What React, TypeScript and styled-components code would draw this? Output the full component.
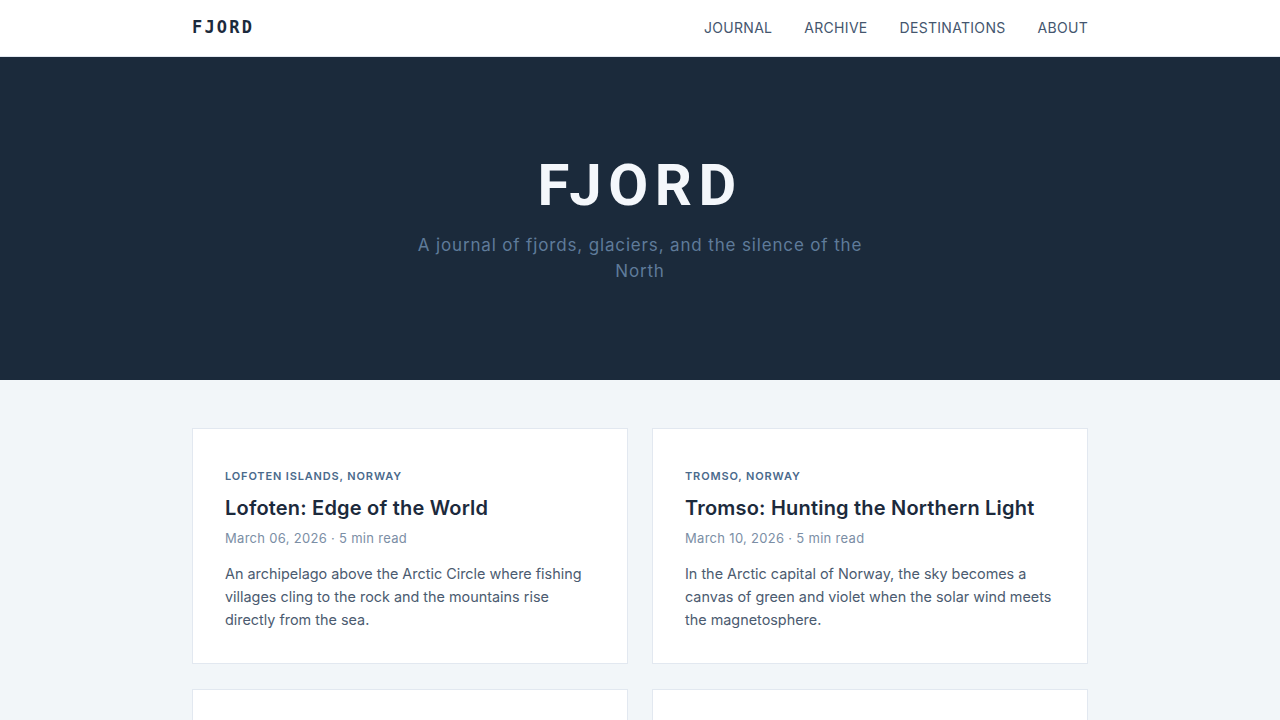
import React from "react";
import styled, { createGlobalStyle } from "styled-components";

const Global = createGlobalStyle`
  * { box-sizing: border-box; }
  body { margin: 0; background: #f2f6f9; font-family: Inter, "Noto Sans", sans-serif; -webkit-font-smoothing: antialiased; }
`;

const Header = styled.header`
  background: #ffffff;
  border-bottom: 1px solid #e2e8f0;
  height: 57px;
`;

const Container = styled.div`
  width: 896px;
  margin: 0 auto;
`;

const HeaderInner = styled(Container)`
  height: 54px;
  display: flex;
  align-items: center;
  justify-content: space-between;
`;

const Logo = styled.div`
  font-family: "DejaVu Sans Mono", monospace;
  font-weight: 700;
  font-size: 17px;
  letter-spacing: 2.2px;
  color: #1c2a3c;
`;

const Nav = styled.nav`
  display: flex;
  gap: 32px;
`;

const NavLink = styled.a`
  font-size: 14px;
  letter-spacing: 0.3px;
  color: #44566e;
  text-transform: uppercase;
  text-decoration: none;
`;

const Hero = styled.section`
  background: #1b2a3b;
  height: 323px;
  display: flex;
  flex-direction: column;
  align-items: center;
  padding-top: 94px;
`;

const HeroTitle = styled.h1`
  margin: 0;
  font-family: Roboto, Inter, sans-serif;
  font-weight: 700;
  font-size: 58px;
  line-height: 68px;
  letter-spacing: 6.5px;
  color: #f4f7fb;
`;

const HeroSub = styled.p`
  margin: 13px 0 0;
  max-width: 470px;
  text-align: center;
  font-size: 17px;
  line-height: 26px;
  letter-spacing: 0.85px;
  color: #5f7b9a;
`;

const Grid = styled(Container)`
  display: grid;
  grid-template-columns: 1fr 1fr;
  gap: 25px 24px;
  padding: 48px 0 48px;
`;

const Card = styled.article`
  background: #ffffff;
  border: 1px solid #e2e8f0;
  padding: 40px 32px 32px;
  min-height: 234px;
`;

const Tag = styled.div`
  font-size: 11px;
  font-weight: 600;
  letter-spacing: 0.85px;
  text-transform: uppercase;
  color: #4a6a8c;
  line-height: 14px;
`;

const Title = styled.h2`
  margin: 11px 0 0;
  font-family: Inter, sans-serif;
  font-weight: 600;
  font-size: 20px;
  line-height: 28px;
  letter-spacing: 0.2px;
  color: #1c2a3c;
`;

const Meta = styled.div`
  margin-top: 7px;
  font-size: 13px;
  line-height: 18px;
  letter-spacing: 0.3px;
  color: #7b8ea5;
`;

const Excerpt = styled.p`
  margin: 15px 0 0;
  font-size: 14.4px;
  line-height: 23px;
  color: #4b5b70;
`;

const posts = [
  {
    tag: "Lofoten Islands, Norway",
    title: "Lofoten: Edge of the World",
    meta: "March 06, 2026 · 5 min read",
    excerpt:
      "An archipelago above the Arctic Circle where fishing villages cling to the rock and the mountains rise directly from the sea.",
  },
  {
    tag: "Tromso, Norway",
    title: "Tromso: Hunting the Northern Light",
    meta: "March 10, 2026 · 5 min read",
    excerpt:
      "In the Arctic capital of Norway, the sky becomes a canvas of green and violet when the solar wind meets the magnetosphere.",
  },
  {
    tag: "Geirangerfjord, Norway",
    title: "Geiranger: The Green Walls",
    meta: "March 14, 2026 · 6 min read",
    excerpt:
      "Waterfalls fall in silence along walls of stone, and the fjord reflects a sky that never quite darkens in summer.",
  },
  {
    tag: "Svalbard, Norway",
    title: "Svalbard: Land of the Polar Bear",
    meta: "March 18, 2026 · 7 min read",
    excerpt:
      "Halfway between the mainland and the North Pole, a frozen archipelago where the glaciers meet the Arctic Ocean.",
  },
];

export default function App() {
  return (
    <>
      <Global />
      <Header>
        <HeaderInner>
          <Logo>FJORD</Logo>
          <Nav>
            <NavLink href="#">Journal</NavLink>
            <NavLink href="#">Archive</NavLink>
            <NavLink href="#">Destinations</NavLink>
            <NavLink href="#">About</NavLink>
          </Nav>
        </HeaderInner>
      </Header>
      <Hero>
        <HeroTitle>FJORD</HeroTitle>
        <HeroSub>A journal of fjords, glaciers, and the silence of the North</HeroSub>
      </Hero>
      <Grid>
        {posts.map((p) => (
          <Card key={p.title}>
            <Tag>{p.tag}</Tag>
            <Title>{p.title}</Title>
            <Meta>{p.meta}</Meta>
            <Excerpt>{p.excerpt}</Excerpt>
          </Card>
        ))}
      </Grid>
    </>
  );
}
